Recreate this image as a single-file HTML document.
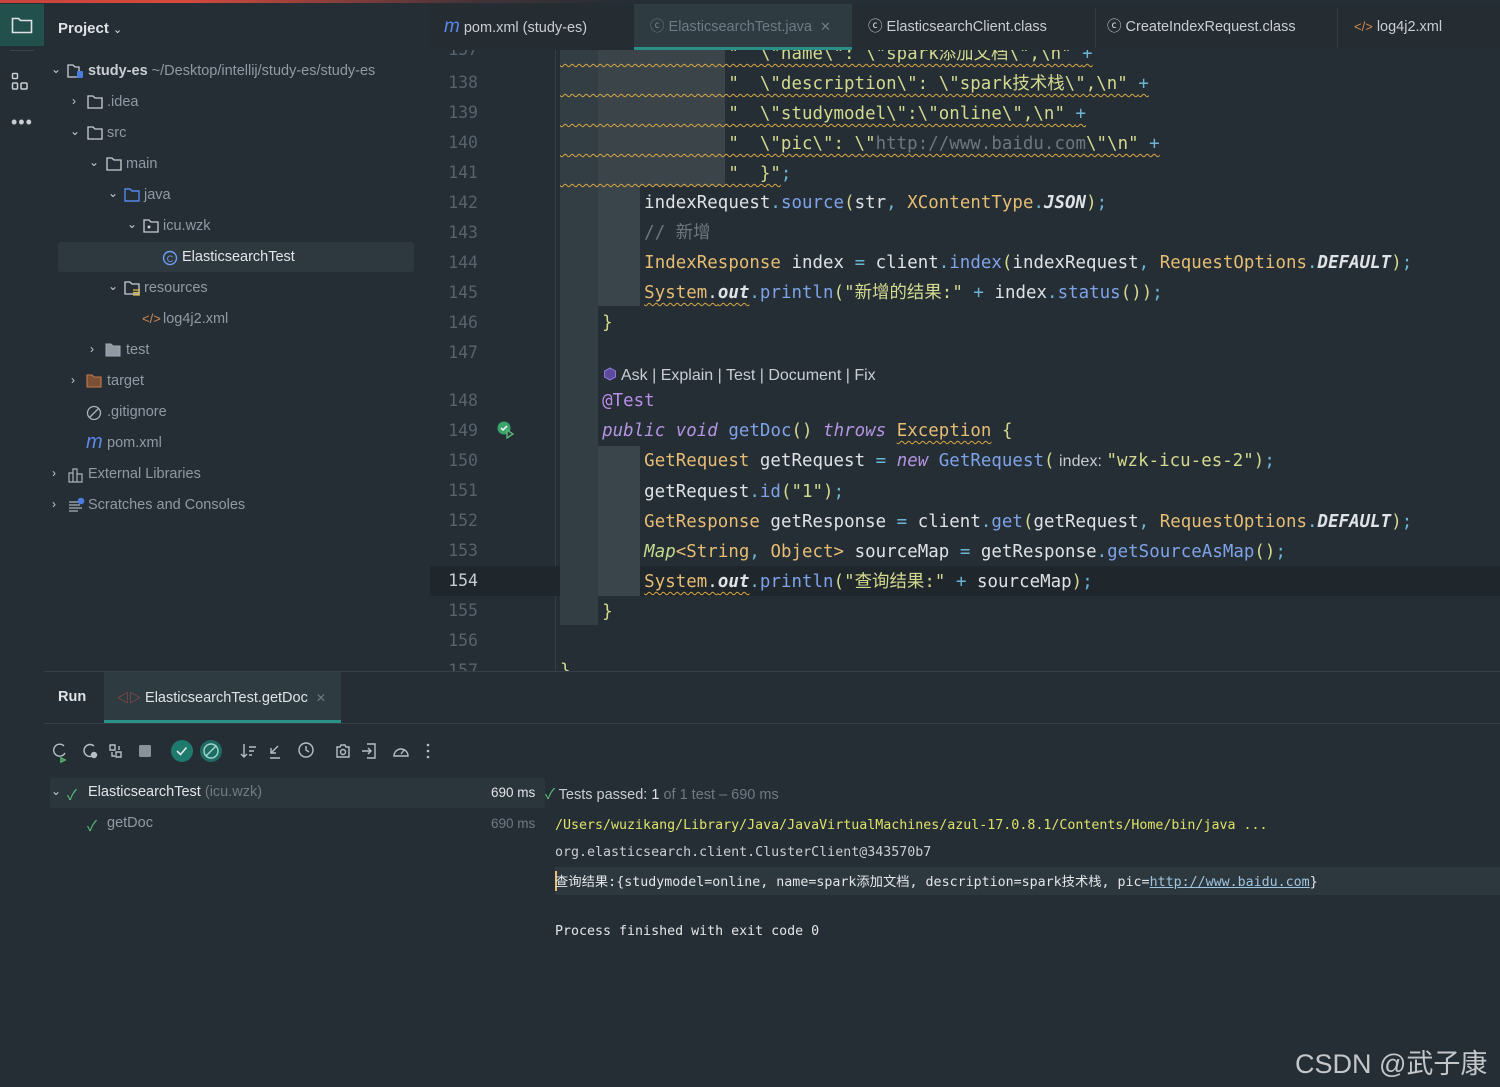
<!DOCTYPE html>
<html><head><meta charset="utf-8"><style>
*{margin:0;padding:0;box-sizing:border-box}
body{width:1500px;height:1087px;background:#262e35;position:relative;overflow:hidden;font-family:"Liberation Sans","Noto Sans CJK SC",sans-serif;color:#c9ced3}
.a{position:absolute}
.ui{font-size:14.5px;white-space:nowrap}
.mono{font-family:"DejaVu Sans Mono","Noto Sans CJK SC",monospace;white-space:pre}
.code{font-size:17.4px;color:#dfe3e6;letter-spacing:0.05px}
.ln{font-family:"DejaVu Sans Mono",monospace;font-size:16.5px;color:#56626c;width:50px;text-align:right;left:428px}
.t{color:#e6bd73}.m{color:#7ea3e8}.p{color:#6cb6d4}.k{color:#b394e2;font-style:italic}.s{color:#d3da8f}.c{color:#6d7780}.g{color:#c3db8c}.w{text-decoration:underline wavy #d9a843;text-decoration-thickness:1px;text-underline-offset:4px}
.tab{top:8px;height:42px;line-height:38px;font-size:14.5px;color:#c9ced3;z-index:6;white-space:nowrap}
.top{z-index:5}
.tree{font-size:14.5px;color:#8f9aa4}
.tree div{white-space:nowrap}
.fold{color:#c9ced3;font-size:12px}
</style></head><body>
<div class="a" style="left:0;top:0;width:620px;height:3px;background:linear-gradient(90deg,#c9443c,#d64a3d 30%,rgba(120,60,60,0.4) 75%,transparent);z-index:7"></div>
<div class="a" style="left:0;top:4px;width:44px;height:42px;background:#21504d"></div>
<svg class="a" style="left:11px;top:16px" width="22" height="18" viewBox="0 0 22 18"><path d="M1.5 2.5h6l2 2h11v12h-19z" fill="none" stroke="#dfe3e6" stroke-width="1.6"/></svg>
<div class="a" style="left:10px;top:50px;width:24px;height:1px;background:#3a444c"></div>
<svg class="a" style="left:11px;top:72px" width="20" height="20" viewBox="0 0 20 20"><g fill="none" stroke="#c9ced3" stroke-width="1.5"><rect x="1.5" y="1.5" width="5" height="5" rx="1"/><rect x="1.5" y="11" width="5" height="6" rx="1"/><rect x="10" y="11" width="6" height="6" rx="1"/></g></svg>
<div class="a" style="left:11px;top:112px;font-size:18px;color:#c9ced3;letter-spacing:1px">•••</div>
<div class="a ui" style="left:58px;top:20px;font-weight:bold;color:#dfe3e6;font-size:15px">Project <span style="font-weight:normal;font-size:11px">⌄</span></div>
<div class="a" style="left:58px;top:242px;width:356px;height:30px;background:#2e383f;border-radius:3px"></div>
<div class="a tree" style="left:0;top:0">
<div class="a fold" style="left:51px;top:62px">⌄</div><svg class="a" style="left:67px;top:63px" width="18" height="16"><path d="M1 2h5l2 2h4v10H1z" fill="none" stroke="#c9ced3" stroke-width="1.3"/><rect x="10" y="8" width="6" height="7" rx="1" fill="#4a7de0"/></svg><div class="a" style="left:88px;top:63px"><b style="color:#c9ced3">study-es</b> ~/Desktop/intellij/study-es/study-es</div>
<div class="a fold" style="left:72px;top:94px">›</div><svg class="a" style="left:87px;top:95px" width="16" height="14"><path d="M1 1h5l2 2h7v10H1z" fill="none" stroke="#c9ced3" stroke-width="1.3"/></svg><div class="a" style="left:107px;top:94px">.idea</div>
<div class="a fold" style="left:70px;top:124px">⌄</div><svg class="a" style="left:87px;top:126px" width="16" height="14"><path d="M1 1h5l2 2h7v10H1z" fill="none" stroke="#c9ced3" stroke-width="1.3"/></svg><div class="a" style="left:107px;top:125px">src</div>
<div class="a fold" style="left:89px;top:155px">⌄</div><svg class="a" style="left:106px;top:157px" width="16" height="14"><path d="M1 1h5l2 2h7v10H1z" fill="none" stroke="#c9ced3" stroke-width="1.3"/></svg><div class="a" style="left:126px;top:156px">main</div>
<div class="a fold" style="left:108px;top:186px">⌄</div><svg class="a" style="left:124px;top:188px" width="16" height="14"><path d="M1 1h5l2 2h7v10H1z" fill="none" stroke="#5585e8" stroke-width="1.4"/></svg><div class="a" style="left:144px;top:187px">java</div>
<div class="a fold" style="left:127px;top:217px">⌄</div><svg class="a" style="left:143px;top:219px" width="16" height="14"><path d="M1 1h5l2 2h7v10H1z" fill="none" stroke="#c9ced3" stroke-width="1.3"/><circle cx="6" cy="8" r="1.5" fill="#c9ced3"/></svg><div class="a" style="left:163px;top:218px">icu.wzk</div>
<svg class="a" style="left:162px;top:250px" width="16" height="16"><circle cx="8" cy="8" r="6.5" fill="none" stroke="#6f9cf0" stroke-width="1.4"/><text x="8" y="12" font-size="9" fill="#6f9cf0" text-anchor="middle" font-family="Liberation Sans">C</text></svg><div class="a" style="left:182px;top:249px;color:#e3e6e9">ElasticsearchTest</div>
<div class="a fold" style="left:108px;top:279px">⌄</div><svg class="a" style="left:124px;top:281px" width="18" height="16"><path d="M1 1h5l2 2h7v10H1z" fill="none" stroke="#c9ced3" stroke-width="1.3"/><path d="M9 9h7M9 11.5h7M9 14h7" stroke="#d9b84a" stroke-width="1.2"/></svg><div class="a" style="left:144px;top:280px">resources</div>
<div class="a" style="left:142px;top:311px;color:#d28a4e;font-size:13px">&lt;/&gt;</div><div class="a" style="left:163px;top:311px">log4j2.xml</div>
<div class="a fold" style="left:90px;top:342px">›</div><svg class="a" style="left:105px;top:343px" width="16" height="14"><path d="M1 1h5l2 2h7v10H1z" fill="#8f9aa4" stroke="#a0a9b2" stroke-width="1"/></svg><div class="a" style="left:126px;top:342px">test</div>
<div class="a fold" style="left:71px;top:373px">›</div><svg class="a" style="left:86px;top:374px" width="16" height="14"><path d="M1 1h5l2 2h7v10H1z" fill="#7a4f34" stroke="#c57a4a" stroke-width="1.1"/></svg><div class="a" style="left:107px;top:373px">target</div>
<svg class="a" style="left:86px;top:405px" width="16" height="16"><circle cx="8" cy="8" r="6.5" fill="none" stroke="#aab2ba" stroke-width="1.3"/><path d="M3.5 12.5l9-9" stroke="#aab2ba" stroke-width="1.3"/></svg><div class="a" style="left:107px;top:404px">.gitignore</div>
<div class="a" style="left:86px;top:431px;color:#5a87e8;font-style:italic;font-size:20px">m</div><div class="a" style="left:107px;top:435px">pom.xml</div>
<div class="a fold" style="left:52px;top:466px">›</div><svg class="a" style="left:68px;top:467px" width="16" height="16"><path d="M1 6h4v9H1zM5 2h4v13H5zM9 7h5v8H9z" fill="none" stroke="#aab2ba" stroke-width="1.2"/></svg><div class="a" style="left:88px;top:466px">External Libraries</div>
<div class="a fold" style="left:52px;top:497px">›</div><svg class="a" style="left:68px;top:497px" width="18" height="16"><path d="M1 5h9M1 8h11M1 11h13M1 14h9" stroke="#aab2ba" stroke-width="1.2"/><circle cx="13" cy="4" r="3.3" fill="#4a7de0"/></svg><div class="a" style="left:88px;top:497px">Scratches and Consoles</div>
</div>
<div class="a top" style="left:430px;top:4px;width:1070px;height:46px;background:#252c32"></div>
<div class="a top" style="left:634px;top:4px;width:218px;height:46px;background:#2e3b41"></div>
<div class="a top" style="left:634px;top:47px;width:218px;height:3px;background:#2a8f86"></div>
<div class="a tab" style="left:444px"><i style="color:#5a87e8;font-size:19px">m</i> pom.xml (study-es)</div>
<div class="a tab" style="left:650px;color:#6f7a84">ⓒ ElasticsearchTest.java &nbsp;<span style="font-size:13px">✕</span></div>
<div class="a tab" style="left:868px">ⓒ ElasticsearchClient.class</div>
<div class="a tab" style="left:1107px">ⓒ CreateIndexRequest.class</div>
<div class="a tab" style="left:1354px"><span style="color:#d28a4e;font-size:13px">&lt;/&gt;</span> log4j2.xml</div>
<div class="a top" style="left:1095px;top:8px;width:1px;height:40px;background:#333c43"></div>
<div class="a top" style="left:1337px;top:8px;width:1px;height:40px;background:#333c43"></div>
<div class="a" style="left:430px;top:50px;width:1070px;height:622px;overflow:hidden">
 <div class="a" style="left:125px;top:0;width:1px;height:622px;background:#343e45"></div>
 <div class="a" style="left:0;top:516px;width:1070px;height:30px;background:#1f262c"></div>
 <div class="a" style="left:130px;top:0;width:38px;height:575px;background:#323d44"></div>
 <div class="a" style="left:168px;top:0;width:127px;height:136px;background:#3a4449"></div>
 <div class="a" style="left:168px;top:136px;width:42px;height:120px;background:#3a454b"></div>
 <div class="a" style="left:168px;top:396px;width:42px;height:150px;background:#3a454b"></div>
</div>
<div class="a ln" style="top:40px">137</div>
<div class="a ln" style="top:73px">138</div><div class="a ln" style="top:103px">139</div><div class="a ln" style="top:133px">140</div><div class="a ln" style="top:163px">141</div><div class="a ln" style="top:193px">142</div><div class="a ln" style="top:223px">143</div><div class="a ln" style="top:253px">144</div><div class="a ln" style="top:283px">145</div><div class="a ln" style="top:313px">146</div><div class="a ln" style="top:343px">147</div>
<div class="a ln" style="top:391px">148</div><div class="a ln" style="top:421px">149</div><div class="a ln" style="top:451px">150</div><div class="a ln" style="top:481px">151</div><div class="a ln" style="top:511px">152</div><div class="a ln" style="top:541px">153</div><div class="a ln" style="top:571px;color:#c9ced3">154</div><div class="a ln" style="top:601px">155</div><div class="a ln" style="top:631px">156</div>
<div class="a ln" style="top:661px">157</div>
<svg class="a" style="left:496px;top:420px" width="20" height="20"><circle cx="8" cy="8" r="6.5" fill="#3aa36a"/><path d="M5 8l2 2 4-4" stroke="#fff" stroke-width="1.5" fill="none"/><path d="M11 10l6 4-6 4z" fill="#2f3a40" stroke="#5bbf7c" stroke-width="1.3"/></svg>
<div class="a" style="left:560px;top:50px;width:920px;height:140px;overflow:hidden">
<div class="a mono code" style="left:0;top:-11px;line-height:30px"><span class="w s">                "  \"name\": \"spark添加文档\",\n" <span class="p">+</span></span>
<span class="w s">                "  \"description\": \"spark技术栈\",\n" <span class="p">+</span></span>
<span class="w s">                "  \"studymodel\":\"online\",\n" <span class="p">+</span></span>
<span class="w s">                "  \"pic\": \"<span class="c">http://www.baidu.com</span>\"\n" <span class="p">+</span></span>
<span class="w s">                "  }"</span><span class="p">;</span></div></div>
<div class="a mono code" style="left:560px;top:188px;line-height:30px">        indexRequest<span class="p">.</span><span class="m">source</span><span class="s">(</span>str<span class="p">,</span> <span class="t">XContentType</span><span class="p">.</span><b><i>JSON</i></b><span class="s">)</span><span class="p">;</span>
        <span class="c">// 新增</span>
        <span class="t">IndexResponse</span> index <span class="p">=</span> client<span class="p">.</span><span class="m">index</span><span class="s">(</span>indexRequest<span class="p">,</span> <span class="t">RequestOptions</span><span class="p">.</span><b><i>DEFAULT</i></b><span class="s">)</span><span class="p">;</span>
        <span class="t w">System</span><span class="w">.<b><i>out</i></b></span><span class="p">.</span><span class="m">println</span><span class="s">("新增的结果:"</span> <span class="p">+</span> index<span class="p">.</span><span class="m">status</span><span class="s">())</span><span class="p">;</span>
    <span class="s">}</span></div>
<svg class="a" style="left:603px;top:367px" width="14" height="14"><path d="M7 1l5.5 3v6L7 13 1.5 10V4z" fill="#5d4a9e" stroke="#8d79d6"/></svg>
<div class="a ui" style="left:621px;top:367px;font-size:16px;color:#c9ced3">Ask | Explain | Test | Document | Fix</div>
<div class="a mono code" style="left:560px;top:386px;line-height:30px">    <span style="color:#b88ee8">@Test</span>
    <span class="k">public void</span> <span class="m">getDoc</span><span class="s">()</span> <span class="k">throws</span> <span class="t w">Exception</span> <span class="s">{</span>
        <span class="t">GetRequest</span> getRequest <span class="p">=</span> <span class="k">new</span> <span class="m">GetRequest</span><span class="s">(</span><span style="font-family:'Liberation Sans';font-size:16px;color:#c9ced3"> index: </span><span class="s">"wzk-icu-es-2")</span><span class="p">;</span>
        getRequest<span class="p">.</span><span class="m">id</span><span class="s">("1")</span><span class="p">;</span>
        <span class="t">GetResponse</span> getResponse <span class="p">=</span> client<span class="p">.</span><span class="m">get</span><span class="s">(</span>getRequest<span class="p">,</span> <span class="t">RequestOptions</span><span class="p">.</span><b><i>DEFAULT</i></b><span class="s">)</span><span class="p">;</span>
        <i class="g">Map</i><span class="t">&lt;String</span><span class="p">,</span> <span class="t">Object&gt;</span> sourceMap <span class="p">=</span> getResponse<span class="p">.</span><span class="m">getSourceAsMap</span><span class="s">()</span><span class="p">;</span>
        <span class="t w">System</span><span class="w">.<b><i>out</i></b></span><span class="p">.</span><span class="m">println</span><span class="s">("查询结果:"</span> <span class="p">+</span> sourceMap<span class="s">)</span><span class="p">;</span>
    <span class="s">}</span></div>
<div class="a mono code" style="left:560px;top:656px;line-height:30px;height:16px;overflow:hidden"><span class="s">}</span></div>
<div class="a" style="left:44px;top:672px;width:1456px;height:415px;background:#262e35"></div>
<div class="a" style="left:44px;top:671px;width:1456px;height:1px;background:#353f46"></div>
<div class="a" style="left:104px;top:672px;width:237px;height:51px;background:#2e3b41"></div>
<div class="a" style="left:104px;top:720px;width:237px;height:3px;background:#2a8f86"></div>
<div class="a" style="left:44px;top:723px;width:1456px;height:1px;background:#353f46"></div>
<div class="a ui" style="left:58px;top:689px;font-weight:bold;color:#dfe3e6">Run</div>
<div class="a ui" style="left:117px;top:689px;color:#dfe3e6"><span style="color:#c05050;font-size:12px">◁▷</span> ElasticsearchTest.getDoc &nbsp;<span style="color:#6f7a84;font-size:12px">✕</span></div>
<svg class="a" style="left:48px;top:738px" width="400" height="26" viewBox="0 0 400 26"><g fill="none" stroke="#b7bfc6" stroke-width="1.4">
<path d="M16 8a6 6 0 1 0 1 7"/><path d="M13 20l4 2-4 2z" stroke="#5bbf7c"/>
<path d="M46 8a6 6 0 1 0 0 9"/><circle cx="46" cy="17" r="2.5" fill="#b7bfc6"/>
<path d="M62 7h5v5h-5zM68 14h5v5h-5zM64 14v4h3M71 8v4"/>
</g>
<rect x="91" y="7" width="12" height="12" rx="1.5" fill="#8a9299"/>
<circle cx="134" cy="13" r="11" fill="#1f7a6e"/><path d="M129 13l3.5 3.5 6-7" stroke="#e6e9ec" stroke-width="1.6" fill="none"/>
<circle cx="163" cy="13" r="11" fill="#1f6b63"/><circle cx="163" cy="13" r="7" fill="none" stroke="#9fd8cc" stroke-width="1.4"/><path d="M158 18l10-10" stroke="#9fd8cc" stroke-width="1.4"/>
<g fill="none" stroke="#b7bfc6" stroke-width="1.4"><path d="M196 6v13M193 16l3 3 3-3M201 9h7M201 13h5M201 17h3"/><path d="M230 8l-7 7M223 10v5h5M222 20h10"/><circle cx="258" cy="12" r="7"/><path d="M258 8v4l3 2"/><path d="M289 9h3l1-2h4l1 2h3v10h-12z"/><circle cx="295" cy="14" r="2.5"/><path d="M319 6h8v14h-8M314 13h9M320 10l3 3-3 3"/><path d="M346 18a7 7 0 1 1 14 0zM353 16l3-4"/></g>
<circle cx="380" cy="7" r="1.3" fill="#b7bfc6"/><circle cx="380" cy="13" r="1.3" fill="#b7bfc6"/><circle cx="380" cy="19" r="1.3" fill="#b7bfc6"/></svg>
<div class="a" style="left:50px;top:778px;width:495px;height:30px;background:#2b353c;border-radius:3px"></div>
<div class="a ui" style="left:51px;top:784px;color:#c9ced3;font-size:12px">⌄</div>
<div class="a ui" style="left:67px;top:784px;color:#5bbf7c">✓</div>
<div class="a ui" style="left:88px;top:784px;color:#e3e6e9">ElasticsearchTest <span style="color:#6f7a84">(icu.wzk)</span></div>
<div class="a ui" style="left:491px;top:785px;color:#e3e6e9;font-size:13.5px">690 ms</div>
<div class="a ui" style="left:87px;top:815px;color:#5bbf7c">✓</div>
<div class="a ui" style="left:107px;top:815px;color:#8f9aa4">getDoc</div>
<div class="a ui" style="left:491px;top:816px;color:#6f7a84;font-size:13.5px">690 ms</div>
<div class="a ui" style="left:545px;top:783px;color:#c9ced3"><span style="color:#5bbf7c">✓</span> Tests passed: <span style="color:#dfe3e6">1</span> <span style="color:#6f7a84">of 1 test – 690 ms</span></div>
<div class="a" style="left:555px;top:867px;width:945px;height:28px;background:#2d373e"></div>
<div class="a" style="left:555px;top:871px;width:2px;height:20px;background:#e6bd73"></div>
<div class="a mono" style="left:555px;top:818px;font-size:13.3px;color:#dde26a">/Users/wuzikang/Library/Java/JavaVirtualMachines/azul-17.0.8.1/Contents/Home/bin/java ...</div>
<div class="a mono" style="left:555px;top:845px;font-size:13.3px;color:#c9ced3">org.elasticsearch.client.ClusterClient@343570b7</div>
<div class="a mono" style="left:555px;top:871px;font-size:13.3px;color:#e3e6e9">查询结果:{studymodel=online, name=spark添加文档, description=spark技术栈, pic=<span style="color:#9ec5e0;text-decoration:underline">http://www.baidu.com</span>}</div>
<div class="a mono" style="left:555px;top:924px;font-size:13.3px;color:#e3e6e9">Process finished with exit code 0</div>
<div class="a" style="left:1295px;top:1042px;font-size:27px;color:#c3c7ca;font-family:'Liberation Sans','Noto Sans CJK SC',sans-serif;white-space:nowrap">CSDN @武子康</div>
</body></html>
